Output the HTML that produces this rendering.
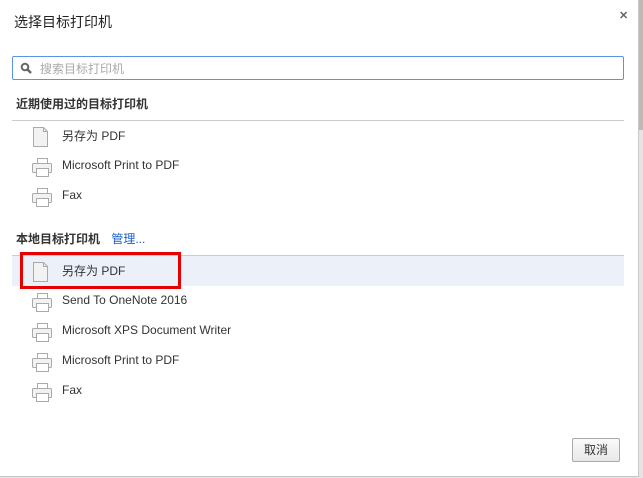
<!DOCTYPE html>
<html><head><meta charset="utf-8"><style>
*{margin:0;padding:0;box-sizing:border-box}
body{width:643px;height:478px;background:#e4e4e4;font-family:"Liberation Sans","Noto Sans CJK SC",sans-serif;font-size:12px;color:#333;position:relative;overflow:hidden}
.bgs{position:absolute;right:0;top:0;width:5px;height:130px;background:#bdbab5}
.dlg{position:absolute;left:0;top:0;width:639px;height:477px;background:#fff;border-right:1px solid #c8c8c8;border-bottom:1px solid #c8c8c8}
.t{position:absolute;left:14px;top:12px;font-size:14px;color:#222}
.x{position:absolute;left:619px;top:9px;font-size:11px;color:#666;font-weight:bold}
.s{position:absolute;left:12px;top:56px;width:612px;height:24px;border:1px solid #5b93e8;border-radius:2px}
.s span{position:absolute;left:27px;top:3px;color:#aaa;font-size:12px}
.h{position:absolute;left:16px;font-weight:bold;font-size:12px;color:#333}
.hr{position:absolute;left:12px;width:612px;height:1px;background:#ccc}
.r{position:absolute;left:12px;width:612px;height:30px}
.r span{position:absolute;left:50px;top:7px}
.r svg{position:absolute;left:19px;top:5px}
.sel{background:#ebf0f9}
.red{position:absolute;left:20px;top:252px;width:161px;height:37px;border:3px solid #e60000}
.btn{position:absolute;left:572px;top:438px;width:48px;height:24px;border:1px solid #aaa;border-radius:2px;background:linear-gradient(#fafafa,#e8e8e8);text-align:center;line-height:22px;color:#333}
</style></head><body>
<div class="bgs"></div>
<div class="dlg">
<div class="t">选择目标打印机</div>
<div class="x">✕</div>
<div class="s"><svg style="position:absolute;left:7px;top:5px" width="12" height="12" viewBox="0 0 12 12"><circle cx="5" cy="5" r="3.3" fill="none" stroke="#666" stroke-width="2"/><path d="M7.5 7.5L11 11" stroke="#666" stroke-width="2.4"/></svg><span>搜索目标打印机</span></div>
<div class="h" style="top:95px">近期使用过的目标打印机</div>
<div class="hr" style="top:120px"></div>
<div class="r" style="top:121px"><svg width="20" height="22"><path d="M2.5 1.5h10l4 4v15h-14z" fill="#f2f2f2" stroke="#aaa"/><path d="M12.5 1.5v4h4" fill="none" stroke="#aaa"/></svg><span style="top:6px">另存为 PDF</span></div>
<div class="r" style="top:151px"><svg width="22" height="22"><rect x="6.5" y="2.5" width="10" height="5" fill="#fff" stroke="#aaa"/><rect x="1.5" y="7.5" width="19" height="9" rx="1" fill="#f2f2f2" stroke="#aaa"/><rect x="5.5" y="12.5" width="12" height="8" fill="#fff" stroke="#aaa"/></svg><span>Microsoft Print to PDF</span></div>
<div class="r" style="top:181px"><svg width="22" height="22"><rect x="6.5" y="2.5" width="10" height="5" fill="#fff" stroke="#aaa"/><rect x="1.5" y="7.5" width="19" height="9" rx="1" fill="#f2f2f2" stroke="#aaa"/><rect x="5.5" y="12.5" width="12" height="8" fill="#fff" stroke="#aaa"/></svg><span>Fax</span></div>
<div class="h" style="top:230px">本地目标打印机 <span style="color:#1a5fcc;font-weight:normal;margin-left:8px">管理...</span></div>
<div class="hr" style="top:255px"></div>
<div class="r sel" style="top:256px"><svg width="20" height="22"><path d="M2.5 1.5h10l4 4v15h-14z" fill="#f2f2f2" stroke="#aaa"/><path d="M12.5 1.5v4h4" fill="none" stroke="#aaa"/></svg><span style="top:6px">另存为 PDF</span></div>
<div class="r" style="top:286px"><svg width="22" height="22"><rect x="6.5" y="2.5" width="10" height="5" fill="#fff" stroke="#aaa"/><rect x="1.5" y="7.5" width="19" height="9" rx="1" fill="#f2f2f2" stroke="#aaa"/><rect x="5.5" y="12.5" width="12" height="8" fill="#fff" stroke="#aaa"/></svg><span>Send To OneNote 2016</span></div>
<div class="r" style="top:316px"><svg width="22" height="22"><rect x="6.5" y="2.5" width="10" height="5" fill="#fff" stroke="#aaa"/><rect x="1.5" y="7.5" width="19" height="9" rx="1" fill="#f2f2f2" stroke="#aaa"/><rect x="5.5" y="12.5" width="12" height="8" fill="#fff" stroke="#aaa"/></svg><span>Microsoft XPS Document Writer</span></div>
<div class="r" style="top:346px"><svg width="22" height="22"><rect x="6.5" y="2.5" width="10" height="5" fill="#fff" stroke="#aaa"/><rect x="1.5" y="7.5" width="19" height="9" rx="1" fill="#f2f2f2" stroke="#aaa"/><rect x="5.5" y="12.5" width="12" height="8" fill="#fff" stroke="#aaa"/></svg><span>Microsoft Print to PDF</span></div>
<div class="r" style="top:376px"><svg width="22" height="22"><rect x="6.5" y="2.5" width="10" height="5" fill="#fff" stroke="#aaa"/><rect x="1.5" y="7.5" width="19" height="9" rx="1" fill="#f2f2f2" stroke="#aaa"/><rect x="5.5" y="12.5" width="12" height="8" fill="#fff" stroke="#aaa"/></svg><span>Fax</span></div>
<div class="red"></div>
<div class="btn">取消</div>
</div>
</body></html>
